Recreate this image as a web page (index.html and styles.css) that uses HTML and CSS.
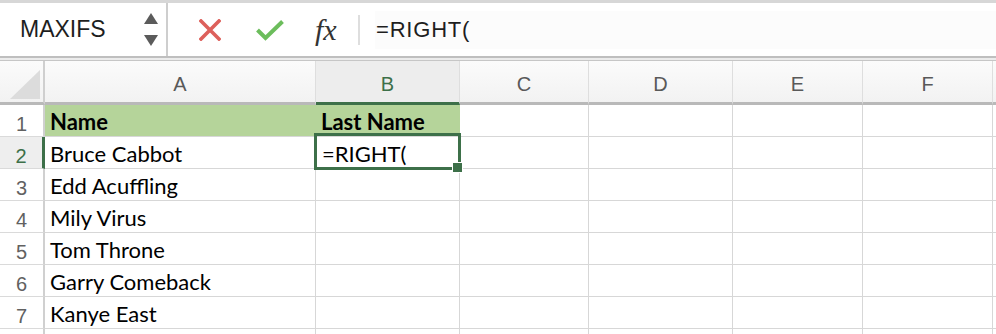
FILE: index.html
```html
<!DOCTYPE html>
<html lang="en">
<head>
  <meta charset="UTF-8">
  <title>Sheet</title>
  <link rel="stylesheet" href="styles.css">
</head>
<body>
  <div class="formula-bar">
    <div class="name-box">
      <span>MAXIFS</span>
      <svg class="spin" width="14" height="33" viewBox="0 0 14 33">
        <polygon points="7,0 14,11 0,11" fill="#5b5b5b"/>
        <polygon points="0,22 14,22 7,33" fill="#5b5b5b"/>
      </svg>
    </div>
    <svg class="cancel" width="22" height="22" viewBox="0 0 22 22">
      <path d="M2 2 L20 20 M20 2 L2 20" stroke="#dd605b" stroke-width="3.6" stroke-linecap="square"/>
    </svg>
    <svg class="enter" width="30" height="22" viewBox="0 0 30 22">
      <path d="M2.5 11 L10.5 19 L27.5 2.5" stroke="#6cbd5c" stroke-width="4" fill="none"/>
    </svg>
    <span class="fx">fx</span>
    <div class="sep"></div>
    <div class="formula">=RIGHT(</div>
  </div>
  <div class="rule"></div>

  <div class="sheet">
    <div class="ch corner">
      <svg width="43" height="41" viewBox="0 0 43 41"><polygon points="10,38 40,38 40,9" fill="#dcdcdc"/></svg>
    </div>
    <div class="ch">A</div>
    <div class="ch sel">B</div>
    <div class="ch">C</div>
    <div class="ch">D</div>
    <div class="ch">E</div>
    <div class="ch">F</div>
    <div class="ch"></div>

    <div class="rh">1</div>
    <div class="c fill bold">Name</div>
    <div class="c fill bold">Last Name</div>
    <div class="c"></div><div class="c"></div><div class="c"></div><div class="c"></div><div class="c"></div>

    <div class="rh sel">2</div>
    <div class="c">Bruce Cabbot</div>
    <div class="c active">=RIGHT(</div>
    <div class="c"></div><div class="c"></div><div class="c"></div><div class="c"></div><div class="c"></div>

    <div class="rh">3</div>
    <div class="c">Edd Acuffling</div>
    <div class="c"></div><div class="c"></div><div class="c"></div><div class="c"></div><div class="c"></div><div class="c"></div>

    <div class="rh">4</div>
    <div class="c">Mily Virus</div>
    <div class="c"></div><div class="c"></div><div class="c"></div><div class="c"></div><div class="c"></div><div class="c"></div>

    <div class="rh">5</div>
    <div class="c">Tom Throne</div>
    <div class="c"></div><div class="c"></div><div class="c"></div><div class="c"></div><div class="c"></div><div class="c"></div>

    <div class="rh">6</div>
    <div class="c">Garry Comeback</div>
    <div class="c"></div><div class="c"></div><div class="c"></div><div class="c"></div><div class="c"></div><div class="c"></div>

    <div class="rh">7</div>
    <div class="c">Kanye East</div>
    <div class="c"></div><div class="c"></div><div class="c"></div><div class="c"></div><div class="c"></div><div class="c"></div>

    <div class="rh"></div>
    <div class="c"></div><div class="c"></div><div class="c"></div><div class="c"></div><div class="c"></div><div class="c"></div><div class="c"></div>
  </div>
</body>
</html>
```

FILE: styles.css
```css
body {
  margin: 0;
  background: #fff;
  overflow: hidden;
  font-family: 'Liberation Sans', sans-serif;
}

.formula-bar {
  display: flex;
  align-items: center;
  height: 53px;
  border-top: 3px solid #d7d7d7;
  border-bottom: 2px solid #bfbfbf;
}

.name-box {
  display: flex;
  align-items: center;
  box-sizing: border-box;
  width: 168px;
  height: 100%;
  padding-left: 20px;
  border-right: 2px solid #cecece;
  font-size: 23px;
  color: #1e1e1e;
}

.spin {
  margin-left: auto;
  margin-right: 8px;
}

.cancel {
  margin-left: 31px;
}

.enter {
  margin-left: 34px;
}

.fx {
  display: inline-block;
  width: 30px;
  margin-left: 30px;
  font-family: 'Liberation Serif', serif;
  font-style: italic;
  font-size: 30px;
  color: #333;
}

.sep {
  width: 2px;
  height: 30px;
  margin-left: 13px;
  background: #dedede;
}

.formula {
  flex: 1;
  display: flex;
  align-items: center;
  height: 38px;
  margin-left: 15px;
  padding-left: 1px;
  background: #fcfcfc;
  font-size: 22px;
  letter-spacing: 0.8px;
  color: #1e1e1e;
}

.rule {
  height: 2px;
  background: #ececec;
  border-bottom: 1px solid #c6c6c6;
}

.sheet {
  display: grid;
  grid-template-columns: 45px 271px 144px 129px 144px 130px 130px 1fr;
  grid-template-rows: 44px;
  grid-auto-rows: 32px;
}

.sheet > div {
  box-sizing: border-box;
}

.ch {
  background: linear-gradient(#fbfbfb, #f2f2f2);
  border-right: 1px solid #dedede;
  border-bottom: 3px solid #b9b9b9;
  padding-top: 6px;
  line-height: 35px;
  text-align: center;
  font-size: 20px;
  color: #595959;
}

.ch.corner {
  padding: 0;
  border-right: 2px solid #cfcfcf;
}

.ch.corner svg {
  display: block;
}

.ch.sel {
  background: #ededed;
  color: #3d7049;
  border-bottom-color: #3d7049;
}

.rh {
  border-right: 2px solid #d0d0d0;
  border-bottom: 1px solid #dadada;
  padding-top: 7px;
  line-height: 24px;
  text-align: center;
  font-size: 20px;
  color: #616161;
}

.rh.sel {
  background: #eeeeee;
  border-right: 3px solid #3d7049;
  color: #3d7049;
}

.c {
  border-right: 1px solid #d7d7d7;
  border-bottom: 1px solid #d7d7d7;
  padding: 5px 0 0 5px;
  line-height: 24px;
  font-family: Lato, 'Liberation Sans', sans-serif;
  font-size: 22px;
  color: #000;
  white-space: nowrap;
}

.c.fill {
  background: #b5d49a;
  border-right-color: #b5d49a;
}

.c.bold {
  font-weight: bold;
}

.c.active {
  position: relative;
  padding-left: 6px;
}

.c.active::before {
  content: "";
  position: absolute;
  top: -4px;
  left: -2px;
  right: -2px;
  bottom: -2px;
  border: 3px solid #3d7049;
}

.c.active::after {
  content: "";
  position: absolute;
  right: -4px;
  bottom: -5px;
  width: 9px;
  height: 9px;
  background: #3d7049;
  border: 1px solid #fff;
}
```
